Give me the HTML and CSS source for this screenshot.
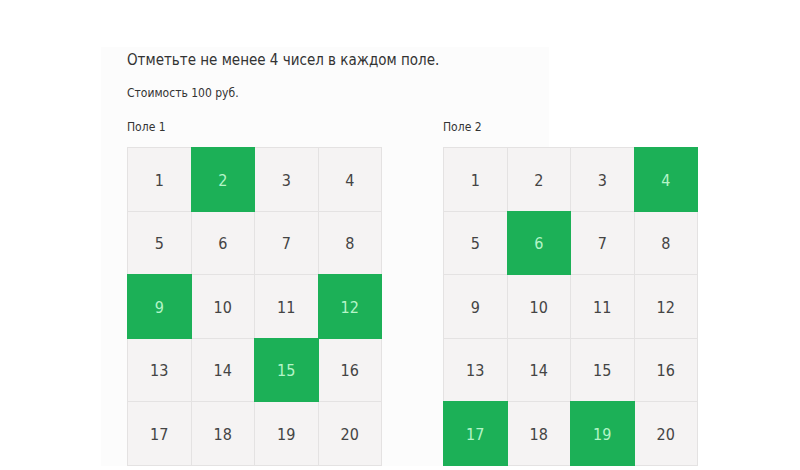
FILE: index.html
```html
<!DOCTYPE html>
<html lang="ru">
<head>
  <meta charset="UTF-8" />
  <meta name="viewport" content="width=device-width, initial-scale=1.0" />
  <title>Лотерея</title>
  <link rel="stylesheet" href="styles.css">
</head>
<body>
  <div class="panel">
    <h1 class="title">Отметьте не менее 4 чисел в каждом поле.</h1>
    <p class="price">Стоимость 100 руб.</p>

    <div class="fields">
      <div class="field">
        <div class="field-name">Поле 1</div>
        <div class="grid">
          <div class="cell">1</div>
          <div class="cell on">2</div>
          <div class="cell">3</div>
          <div class="cell">4</div>
          <div class="cell">5</div>
          <div class="cell">6</div>
          <div class="cell">7</div>
          <div class="cell">8</div>
          <div class="cell on">9</div>
          <div class="cell">10</div>
          <div class="cell">11</div>
          <div class="cell on">12</div>
          <div class="cell">13</div>
          <div class="cell">14</div>
          <div class="cell on">15</div>
          <div class="cell">16</div>
          <div class="cell">17</div>
          <div class="cell">18</div>
          <div class="cell">19</div>
          <div class="cell">20</div>
        </div>
      </div>

      <div class="field">
        <div class="field-name">Поле 2</div>
        <div class="grid">
          <div class="cell">1</div>
          <div class="cell">2</div>
          <div class="cell">3</div>
          <div class="cell on">4</div>
          <div class="cell">5</div>
          <div class="cell on">6</div>
          <div class="cell">7</div>
          <div class="cell">8</div>
          <div class="cell">9</div>
          <div class="cell">10</div>
          <div class="cell">11</div>
          <div class="cell">12</div>
          <div class="cell">13</div>
          <div class="cell">14</div>
          <div class="cell">15</div>
          <div class="cell">16</div>
          <div class="cell on">17</div>
          <div class="cell">18</div>
          <div class="cell on">19</div>
          <div class="cell">20</div>
        </div>
      </div>
    </div>
  </div>
</body>
</html>
```

FILE: styles.css
```css
body {
  margin: 0;
  padding: 0;
  background: #fff;
  font-family: 'DejaVu Sans Condensed', 'DejaVu Sans', sans-serif;
  color: #333;
  height: 470px;
  overflow: hidden;
}
.panel {
  margin: 47px 0 0 101px;
  width: 422px;
  padding: 4px 0 0 26px;
  background: #fcfcfc;
}
.title {
  margin: 0;
  font-size: 15px;
  font-weight: normal;
  line-height: 18px;
}
.price {
  margin: 16px 0 0;
  font-size: 12px;
  line-height: 16px;
}
.fields {
  display: flex;
  gap: 61px;
  margin-top: 18px;
}
.field-name {
  font-size: 12px;
  line-height: 16px;
  margin-bottom: 12px;
}
.grid {
  display: grid;
  grid-template-columns: repeat(4, 62.5px);
  grid-auto-rows: 62.5px;
  gap: 1px;
  padding: 1px;
  background: #e4e2e2;
}
.cell {
  display: flex;
  align-items: center;
  justify-content: center;
  background: #f5f3f3;
  font-size: 16px;
  color: #444;
  padding-top: 2px;
}
.cell.on {
  background: #1cb057;
  color: #b4f5c8;
  margin: -1px;
}
```
